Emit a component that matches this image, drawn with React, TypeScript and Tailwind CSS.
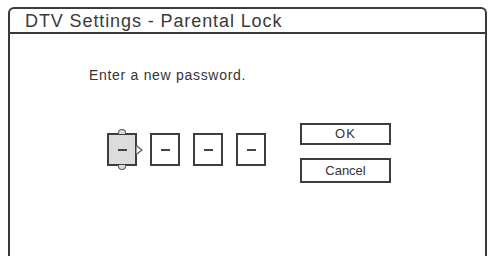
const digits = ["-", "-", "-", "-"];

const DigitBox = ({ active }: { active?: boolean }) => {
  return (
    <div
      className={`relative flex h-[33px] w-[30px] items-center justify-center border-2 border-[#3d3d3d] ${
        active ? "bg-[#dcdcdc]" : "bg-white"
      }`}
    >
      <div className="h-[2px] w-[9px] bg-[#444]"></div>
      {active && (
        <>
          <div className="absolute -top-[6px] left-1/2 h-[5px] w-[8px] -translate-x-1/2 rounded-t-full border border-b-0 border-[#555] bg-[#dcdcdc]"></div>
          <div className="absolute -bottom-[6px] left-1/2 h-[5px] w-[8px] -translate-x-1/2 rounded-b-full border border-t-0 border-[#555] bg-[#dcdcdc]"></div>
          <svg
            className="absolute -right-[8px] top-1/2 -translate-y-1/2"
            width="7"
            height="10"
            viewBox="0 0 7 10"
          >
            <path d="M0.5 0.8 L6 5 L0.5 9.2" fill="white" stroke="#555" strokeWidth="1.2" />
          </svg>
        </>
      )}
    </div>
  );
};

export default function App() {
  return (
    <div
      className="h-[256px] w-[489px] overflow-hidden bg-white pl-[8px] pr-[2px] pt-[7px] text-[#3a3a3a]"
      style={{ fontFamily: '"Liberation Sans", Arial, sans-serif' }}
    >
      <div className="h-[270px] rounded-t-[6px] border-2 border-b-0 border-[#3a3a3a]">
        <div className="h-[25px] border-b-2 border-[#3a3a3a] pl-[15px] pt-[3px] text-[18px] leading-[18px] tracking-[0.9px]">
          DTV Settings - Parental Lock
        </div>
        <div className="pl-[79px] pt-[33px] text-[14px] leading-[16px] tracking-[0.7px] text-[#333]">
          Enter a new password.
        </div>
        <div className="mt-[40px] flex items-start pl-[97px]">
          <div className="mt-[10px] flex gap-[13px]">
            {digits.map((d, i) => (
              <DigitBox key={i} active={i === 0} />
            ))}
          </div>
          <div className="ml-[34px] flex flex-col gap-[13px]">
            <button className="h-[22px] w-[91px] border-2 border-[#3d3d3d] bg-white text-[13px] leading-[18px] tracking-[1px] text-[#333]">
              OK
            </button>
            <button className="h-[25px] w-[91px] border-2 border-[#3d3d3d] bg-white text-[13px] leading-[20px] text-[#333]">
              Cancel
            </button>
          </div>
        </div>
      </div>
    </div>
  );
}
